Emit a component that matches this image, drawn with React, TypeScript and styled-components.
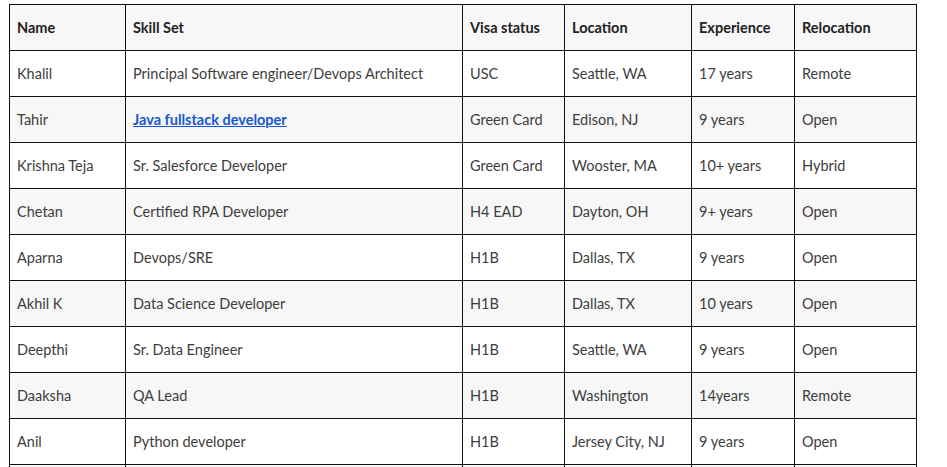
import React from 'react';
import styled, { createGlobalStyle } from 'styled-components';

const GlobalStyle = createGlobalStyle`
  body {
    margin: 0;
    background: #ffffff;
    font-family: Lato, 'Open Sans', sans-serif;
  }
`;

interface Candidate {
  name: string;
  skill: string;
  visa: string;
  location: string;
  experience: string;
  relocation: string;
  link?: boolean;
}

const COLUMNS = [
  { title: 'Name', width: 116 },
  { title: 'Skill Set', width: 337 },
  { title: 'Visa status', width: 102 },
  { title: 'Location', width: 127 },
  { title: 'Experience', width: 103 },
  { title: 'Relocation', width: 122 },
];

const candidates: Candidate[] = [
  { name: 'Khalil', skill: 'Principal Software engineer/Devops Architect', visa: 'USC', location: 'Seattle, WA', experience: '17 years', relocation: 'Remote' },
  { name: 'Tahir', skill: 'Java fullstack developer', visa: 'Green Card', location: 'Edison, NJ', experience: '9 years', relocation: 'Open', link: true },
  { name: 'Krishna Teja', skill: 'Sr. Salesforce Developer', visa: 'Green Card', location: 'Wooster, MA', experience: '10+ years', relocation: 'Hybrid' },
  { name: 'Chetan', skill: 'Certified RPA Developer', visa: 'H4 EAD', location: 'Dayton, OH', experience: '9+ years', relocation: 'Open' },
  { name: 'Aparna', skill: 'Devops/SRE', visa: 'H1B', location: 'Dallas, TX', experience: '9 years', relocation: 'Open' },
  { name: 'Akhil K', skill: 'Data Science Developer', visa: 'H1B', location: 'Dallas, TX', experience: '10 years', relocation: 'Open' },
  { name: 'Deepthi', skill: 'Sr. Data Engineer', visa: 'H1B', location: 'Seattle, WA', experience: '9 years', relocation: 'Open' },
  { name: 'Daaksha', skill: 'QA Lead', visa: 'H1B', location: 'Washington', experience: '14years', relocation: 'Remote' },
  { name: 'Anil', skill: 'Python developer', visa: 'H1B', location: 'Jersey City, NJ', experience: '9 years', relocation: 'Open' },
  { name: '', skill: '', visa: '', location: '', experience: '', relocation: '' },
];

const Page = styled.div`
  height: 467px;
  overflow: hidden;
  padding: 4px 0 0 9px;
  box-sizing: border-box;
`;

const Table = styled.table`
  border-collapse: collapse;
  table-layout: fixed;
  width: 907px;
  font-size: 14.5px;
`;

const Row = styled.tr<{ $shaded: boolean }>`
  background: ${(p) => (p.$shaded ? '#f7f7f7' : '#ffffff')};
`;

const HeadCell = styled.th`
  height: 46px;
  padding: 0 7px;
  box-sizing: border-box;
  border: 1px solid #111;
  text-align: left;
  font-weight: 700;
  color: #222;
  white-space: nowrap;
`;

const Cell = styled.td`
  height: 46px;
  padding: 0 7px;
  box-sizing: border-box;
  border: 1px solid #111;
  color: #3d3d3d;
  white-space: nowrap;
`;

const SkillLink = styled.a`
  color: #1558d6;
  font-weight: 700;
  text-decoration: underline;
`;

export default function App() {
  return (
    <Page>
      <GlobalStyle />
      <Table>
        <colgroup>
          {COLUMNS.map((c) => (
            <col key={c.title} style={{ width: c.width }} />
          ))}
        </colgroup>
        <thead>
          <Row $shaded>
            {COLUMNS.map((c) => (
              <HeadCell key={c.title}>{c.title}</HeadCell>
            ))}
          </Row>
        </thead>
        <tbody>
          {candidates.map((c, i) => (
            <Row key={i} $shaded={i % 2 === 1}>
              <Cell>{c.name}</Cell>
              <Cell>{c.link ? <SkillLink href="#">{c.skill}</SkillLink> : c.skill}</Cell>
              <Cell>{c.visa}</Cell>
              <Cell>{c.location}</Cell>
              <Cell>{c.experience}</Cell>
              <Cell>{c.relocation}</Cell>
            </Row>
          ))}
        </tbody>
      </Table>
    </Page>
  );
}
